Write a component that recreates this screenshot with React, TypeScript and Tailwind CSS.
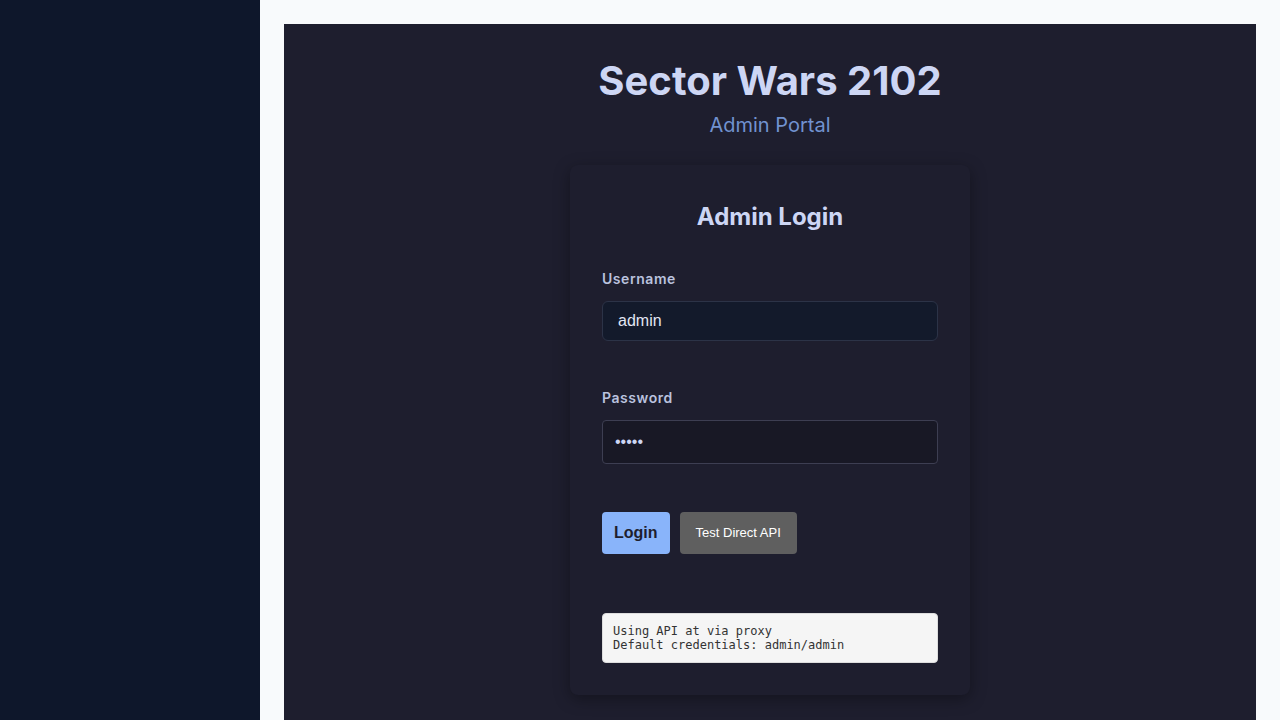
import React from 'react';

// Admin login screen - sidebar + framed dark panel
const Field: React.FC<{ label: string; children: React.ReactNode; className?: string }> = ({ label, children, className }) => (
  <div className={className}>
    <label className="block text-[14px] leading-5 font-semibold tracking-[0.04em] text-[#bac2de] mb-3">{label}</label>
    {children}
  </div>
);

export default function App() {
  const [username, setUsername] = React.useState('admin');
  const [password, setPassword] = React.useState('admin');

  return (
    <div className="flex h-[720px] w-[1280px] overflow-hidden font-['Inter',sans-serif]">
      <aside className="w-[260px] shrink-0 bg-[#0e172b]" />

      <main className="flex-1 bg-[#f8fafc] px-6 pt-6">
        <div className="h-full bg-[#1e1e2e] flex flex-col items-center pt-[33px]">
          <h1 className="text-[40px] leading-[48px] font-bold text-[#cdd6f4]">Sector Wars 2102</h1>
          <p className="mt-[6px] text-[20px] leading-7 text-[#7192d0]">Admin Portal</p>

          <div className="mt-[26px] w-[400px] rounded-lg bg-[#1e1e2e] shadow-[0_4px_16px_rgba(0,0,0,0.35)] px-8 pt-[36px] pb-[32px]">
            <h2 className="text-center text-[24px] leading-8 font-bold text-[#cdd6f4]">Admin Login</h2>

            <Field label="Username" className="mt-[36px]">
              <input
                value={username}
                onChange={e => setUsername(e.target.value)}
                className="block w-full h-10 rounded-md border border-[#2c3347] bg-[#131a2b] px-[15px] text-[16px] text-[#e2e6f3] font-['Liberation_Sans',sans-serif] outline-none"
              />
            </Field>

            <Field label="Password" className="mt-[47px]">
              <input
                type="password"
                value={password}
                onChange={e => setPassword(e.target.value)}
                className="block w-full h-11 rounded-[4px] border border-[#3d3e52] bg-[#181825] px-3 text-[16px] text-[#cdd6f4] font-['Liberation_Sans',sans-serif] outline-none"
              />
            </Field>

            <div className="mt-12 flex gap-[10px]">
              <button className="h-[42px] px-3 rounded-[4px] bg-[#89b4fa] text-[#1e1e2e] text-[16px] font-bold font-['Liberation_Sans',sans-serif]">
                Login
              </button>
              <button className="h-[42px] px-4 rounded-[4px] bg-[#5f5f5f] text-white text-[13px] font-['Liberation_Sans',sans-serif]">
                Test Direct API
              </button>
            </div>

            <div className="mt-[59px] rounded-[4px] border border-[#dddddd] bg-[#f5f5f5] px-[10px] py-[10px] font-['DejaVu_Sans_Mono',monospace] text-[12px] leading-[14px] text-[#333333]">
              <div>Using API at via proxy</div>
              <div>Default credentials: admin/admin</div>
            </div>
          </div>
        </div>
      </main>
    </div>
  );
}
